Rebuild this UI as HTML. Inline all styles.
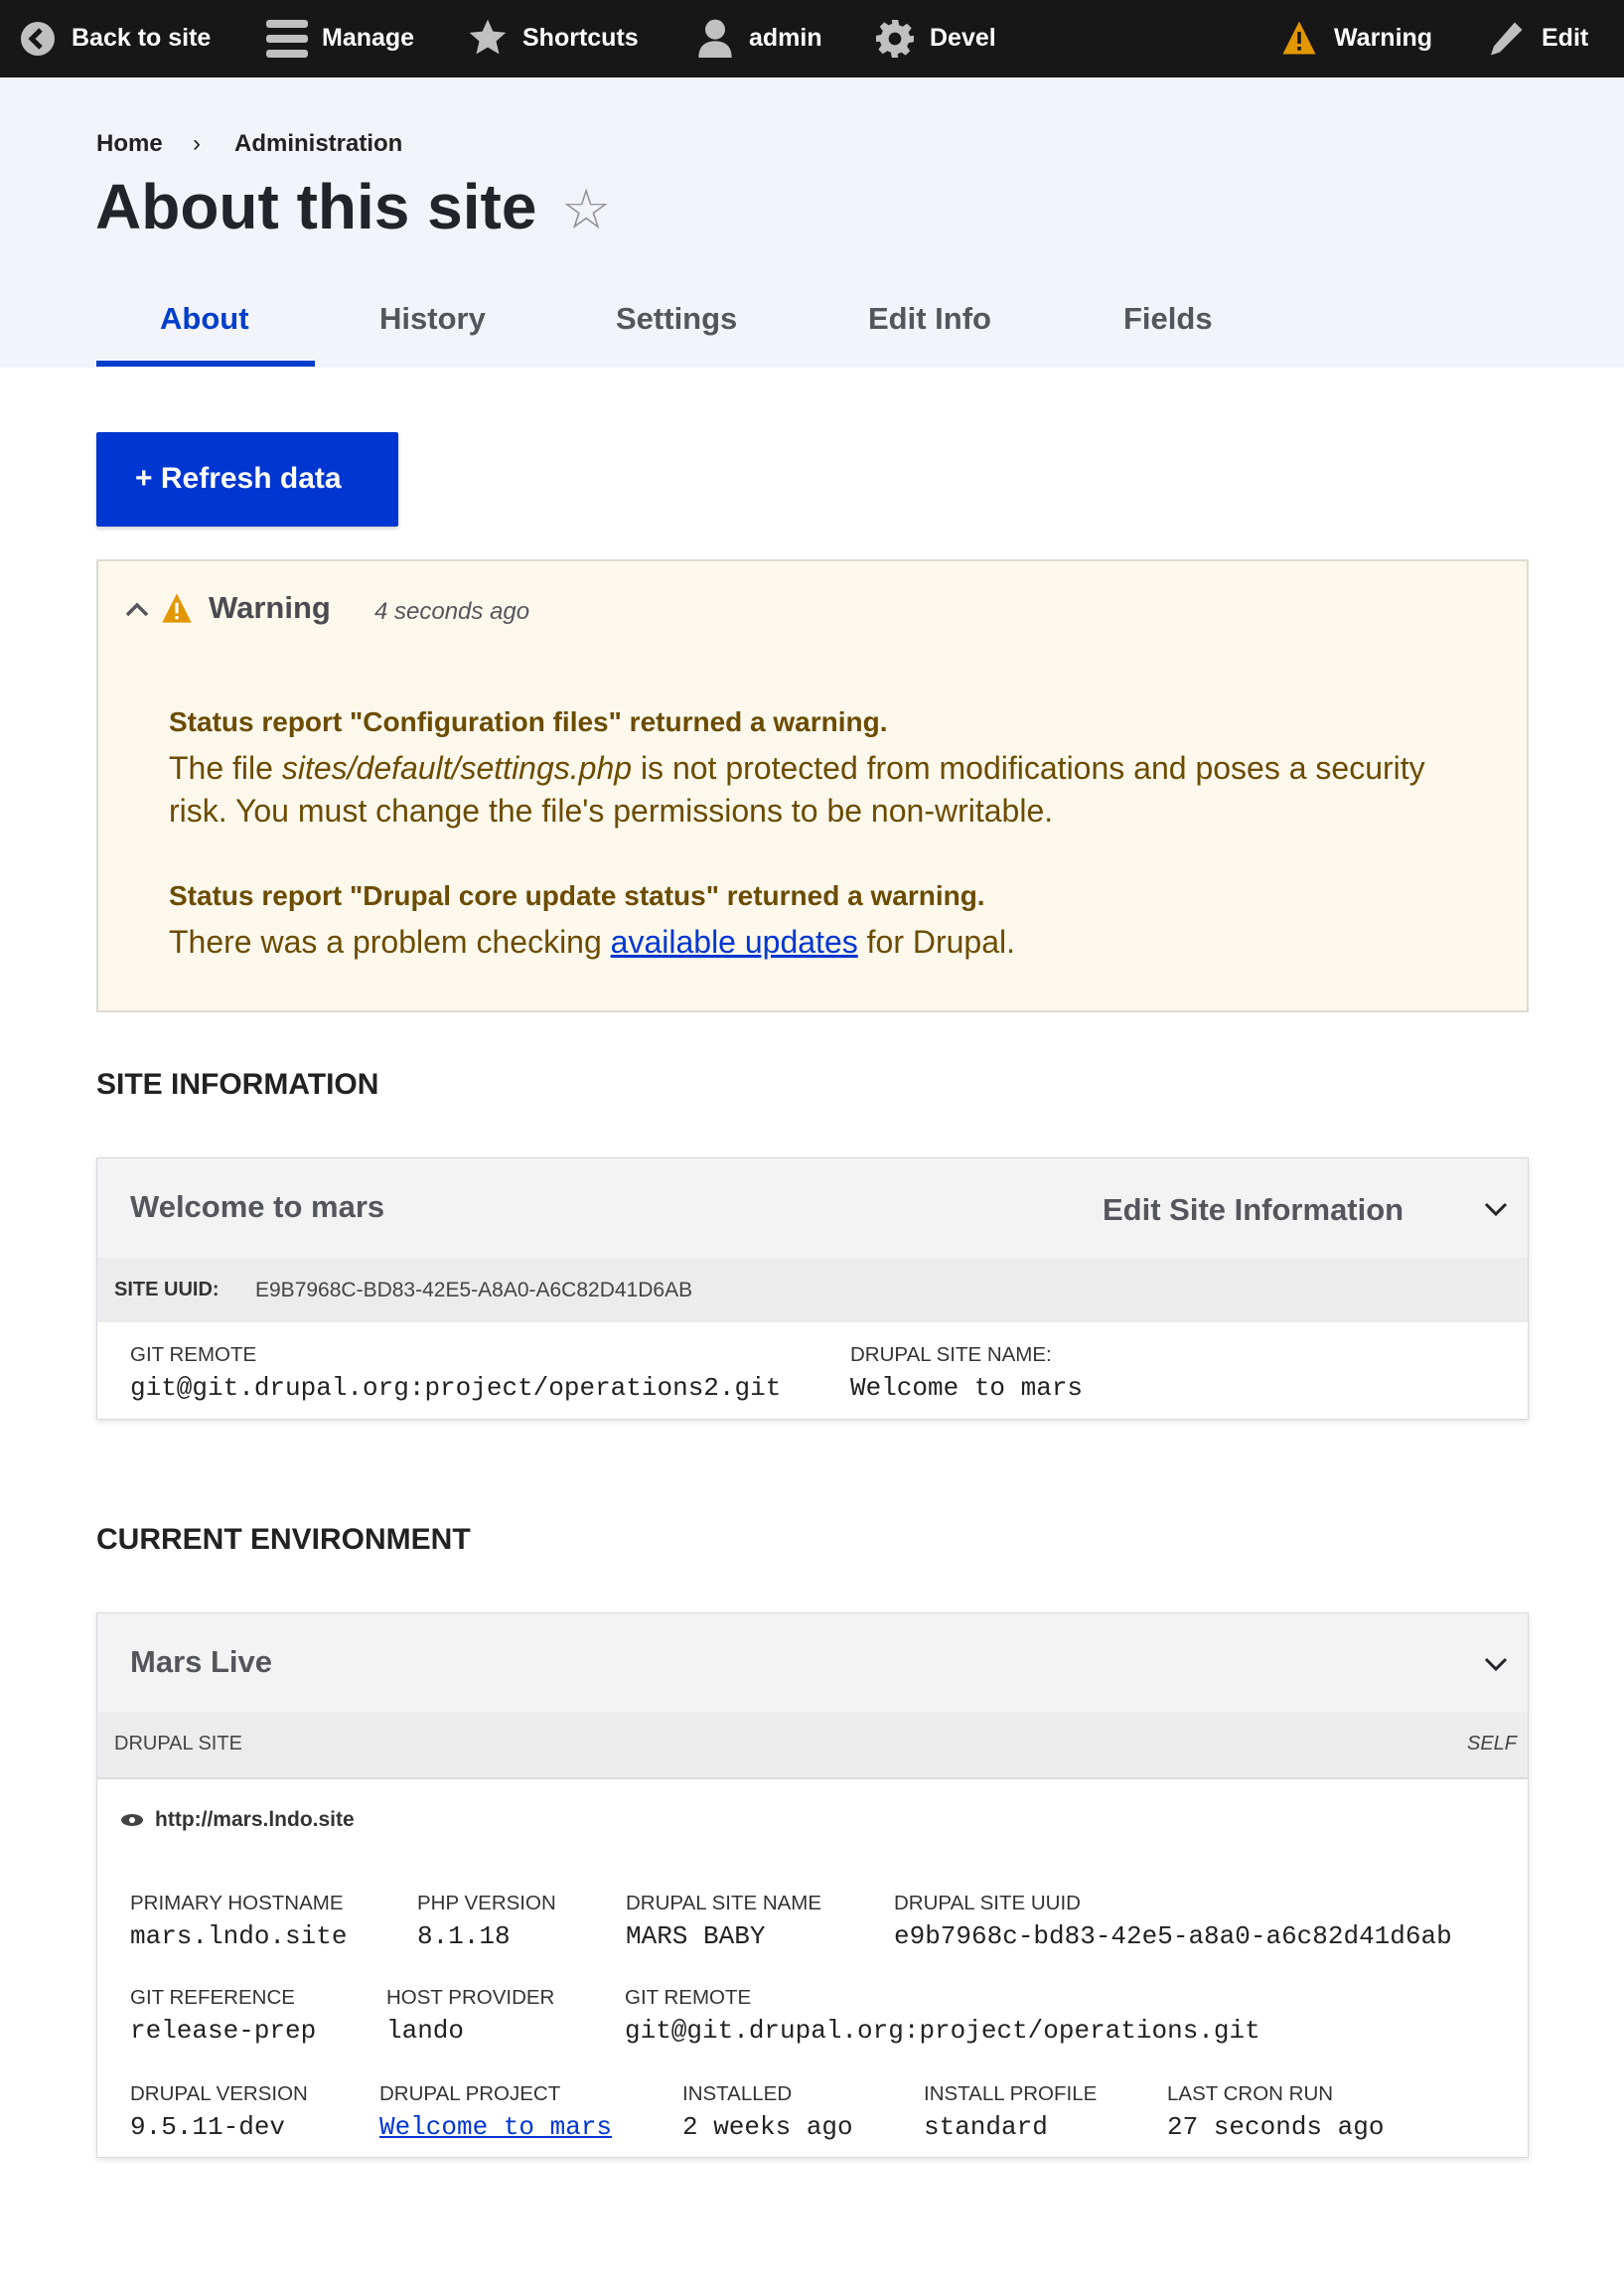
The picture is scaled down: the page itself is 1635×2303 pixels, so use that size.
<!DOCTYPE html>
<html><head><meta charset="utf-8">
<style>
*{margin:0;padding:0;box-sizing:border-box}
body{width:1635px;height:2303px;background:#fff;font-family:"Liberation Sans",sans-serif;position:relative;overflow:hidden;color:#222}
.a{position:absolute;white-space:nowrap}
.tb{background:#171717;height:78px;left:0;top:0;width:1635px;box-shadow:0 2px 4px rgba(0,0,0,.3)}
.ti{color:#fff;font-weight:bold;font-size:25px;top:24px}
.hdr{background:#f3f4f9;left:0;top:78px;width:1635px;height:292px}
.tab{font-size:31px;font-weight:bold;color:#55565b;top:303px}
.lbl{font-size:20.5px;color:#333;text-transform:uppercase}
.val{font-family:"Liberation Mono",monospace;font-size:26px;color:#222}
.card{border:1px solid #d8d9df;box-shadow:0 2px 6px rgba(0,0,0,.12);background:#fff}
.sec{font-size:30px;font-weight:bold;color:#222}
</style></head><body>
<div class="a tb"></div>
<svg class="a" style="left:20px;top:21px" width="36" height="36" viewBox="0 0 36 36"><circle cx="18" cy="18" r="17" fill="#c0c0c0"/><path d="M21 9 L12 18 L21 27" stroke="#171717" stroke-width="5" fill="none"/></svg>
<div class="a ti" style="left:72px">Back to site</div>
<svg class="a" style="left:268px;top:20px" width="42" height="38"><rect x="0" y="0" width="42" height="8" rx="3" fill="#c0c0c0"/><rect x="0" y="15" width="42" height="8" rx="3" fill="#c0c0c0"/><rect x="0" y="30" width="42" height="8" rx="3" fill="#c0c0c0"/></svg>
<div class="a ti" style="left:324px">Manage</div>
<svg class="a" style="left:470px;top:18px" width="42" height="40" viewBox="0 0 24 24"><path d="M12 1l3.2 7.2 7.8.7-5.9 5.2 1.8 7.7L12 17.8 5.1 21.8l1.8-7.7L1 8.9l7.8-.7z" fill="#c0c0c0"/></svg>
<div class="a ti" style="left:526px">Shortcuts</div>
<svg class="a" style="left:700px;top:18px" width="40" height="40" viewBox="0 0 24 24"><circle cx="12" cy="7" r="6" fill="#c0c0c0"/><path d="M2 24c0-7 4-10 10-10s10 3 10 10z" fill="#c0c0c0"/></svg>
<div class="a ti" style="left:754px">admin</div>
<svg class="a" style="left:882px;top:20px" width="38" height="38" viewBox="0 0 24 24"><path d="M10 0h4l.6 3.3 2.3 1 2.8-1.9 2.8 2.8-1.9 2.8 1 2.3L24 10v4l-3.3.6-1 2.3 1.9 2.8-2.8 2.8-2.8-1.9-2.3 1L14 24h-4l-.6-3.3-2.3-1-2.8 1.9-2.8-2.8 1.9-2.8-1-2.3L0 14v-4l3.3-.6 1-2.3-1.9-2.8 2.8-2.8 2.8 1.9 2.3-1z" fill="#c0c0c0"/><circle cx="12" cy="12" r="4" fill="#171717"/></svg>
<div class="a ti" style="left:936px">Devel</div>
<svg class="a" style="left:1290px;top:19px" width="36" height="38" viewBox="0 0 24 24"><path d="M12 1 L23 23 H1 Z" fill="#e29700"/><rect x="10.8" y="8" width="2.4" height="8" fill="#171717"/><rect x="10.8" y="18" width="2.4" height="2.5" fill="#171717"/></svg>
<div class="a ti" style="left:1343px">Warning</div>
<svg class="a" style="left:1498px;top:20px" width="36" height="38" viewBox="0 0 24 24"><path d="M18 1l5 5L8 21l-6 2 2-6z" fill="#c0c0c0"/></svg>
<div class="a ti" style="left:1552px">Edit</div>

<div class="a hdr"></div>
<div class="a" style="left:97px;top:131px;font-size:24px;font-weight:bold;color:#222">Home</div>
<div class="a" style="left:194px;top:131px;font-size:24px;color:#222">›</div>
<div class="a" style="left:236px;top:131px;font-size:24px;font-weight:bold;color:#222">Administration</div>
<div class="a" style="left:96px;top:171px;font-size:64px;font-weight:bold;color:#232429">About this site</div>
<div class="a" style="left:565px;top:178px;font-size:56px;color:#8e929c">☆</div>
<div class="a tab" style="left:161px;color:#003ecc">About</div>
<div class="a tab" style="left:382px">History</div>
<div class="a tab" style="left:620px">Settings</div>
<div class="a tab" style="left:874px">Edit Info</div>
<div class="a tab" style="left:1131px">Fields</div>
<div class="a" style="left:97px;top:363px;width:220px;height:6px;background:#003ecc"></div>

<div class="a" style="left:97px;top:435px;width:304px;height:95px;background:#0036d1;border-radius:2px;box-shadow:0 2px 4px rgba(0,0,0,.2)"></div>
<div class="a" style="left:136px;top:465px;font-size:30px;font-weight:bold;color:#fff">+ Refresh data</div>

<div class="a" style="left:97px;top:563px;width:1442px;height:456px;background:#fcf8ec;border:2px solid #dedbd2"></div>
<svg class="a" style="left:126px;top:604px" width="24" height="18"><path d="M2 15 L12 5 L22 15" stroke="#55565b" stroke-width="3.5" fill="none"/></svg>
<svg class="a" style="left:162px;top:596px" width="32" height="32" viewBox="0 0 24 24"><path d="M12 1 L23 23 H1 Z" fill="#e29700"/><rect x="10.8" y="8" width="2.4" height="8" fill="#fff"/><rect x="10.8" y="18" width="2.4" height="2.5" fill="#fff"/></svg>
<div class="a" style="left:210px;top:594px;font-size:31px;font-weight:bold;color:#4a4b50">Warning</div>
<div class="a" style="left:377px;top:602px;font-size:24px;font-style:italic;color:#55565b">4 seconds ago</div>
<div class="a" style="left:170px;top:711px;font-size:28px;font-weight:bold;color:#6b4c00">Status report "Configuration files" returned a warning.</div>
<div class="a" style="left:170px;top:752px;font-size:32px;color:#6b4c00;line-height:43px">The file <i>sites/default/settings.php</i> is not protected from modifications and poses a security<br>risk. You must change the file's permissions to be non-writable.</div>
<div class="a" style="left:170px;top:886px;font-size:28px;font-weight:bold;color:#6b4c00">Status report "Drupal core update status" returned a warning.</div>
<div class="a" style="left:170px;top:930px;font-size:32px;color:#6b4c00">There was a problem checking <span style="color:#0036d1;text-decoration:underline">available updates</span> for Drupal.</div>

<div class="a sec" style="left:97px;top:1075px">SITE INFORMATION</div>
<div class="a card" style="left:97px;top:1165px;width:1442px;height:264px"></div>
<div class="a" style="left:98px;top:1166px;width:1440px;height:100px;background:#f3f3f3"></div>
<div class="a" style="left:98px;top:1266px;width:1440px;height:65px;background:#ececec"></div>
<div class="a" style="left:131px;top:1197px;font-size:31px;font-weight:bold;color:#55565b">Welcome to mars</div>
<div class="a" style="left:1110px;top:1200px;font-size:31px;font-weight:bold;color:#55565b">Edit Site Information</div>
<svg class="a" style="left:1494px;top:1210px" width="24" height="16"><path d="M2 2 L12 12 L22 2" stroke="#232429" stroke-width="3" fill="none"/></svg>
<div class="a" style="left:115px;top:1287px;font-size:20px;font-weight:bold;color:#333">SITE UUID:</div>
<div class="a" style="left:257px;top:1287px;font-size:21px;color:#444">E9B7968C-BD83-42E5-A8A0-A6C82D41D6AB</div>
<div class="a lbl" style="left:131px;top:1352px">Git Remote</div>
<div class="a val" style="left:131px;top:1382px">git@git.drupal.org:project/operations2.git</div>
<div class="a lbl" style="left:856px;top:1352px">Drupal Site Name:</div>
<div class="a val" style="left:856px;top:1382px">Welcome to mars</div>

<div class="a sec" style="left:97px;top:1533px">CURRENT ENVIRONMENT</div>
<div class="a card" style="left:97px;top:1623px;width:1442px;height:549px"></div>
<div class="a" style="left:98px;top:1624px;width:1440px;height:99px;background:#f3f3f3"></div>
<div class="a" style="left:98px;top:1723px;width:1440px;height:68px;background:#ececec;border-bottom:2px solid #dcdcdc"></div>
<div class="a" style="left:131px;top:1655px;font-size:31px;font-weight:bold;color:#55565b">Mars Live</div>
<svg class="a" style="left:1494px;top:1668px" width="24" height="16"><path d="M2 2 L12 12 L22 2" stroke="#232429" stroke-width="3" fill="none"/></svg>
<div class="a" style="left:115px;top:1744px;font-size:20px;color:#444">DRUPAL SITE</div>
<div class="a" style="left:1477px;top:1744px;font-size:20px;font-style:italic;color:#444">SELF</div>
<svg class="a" style="left:121px;top:1825px" width="24" height="14" viewBox="0 0 24 14"><ellipse cx="12" cy="7" rx="11" ry="6" fill="#444"/><circle cx="12" cy="7" r="3" fill="#fff"/></svg>
<div class="a" style="left:156px;top:1820px;font-size:21px;font-weight:bold;color:#333">http://mars.lndo.site</div>

<div class="a lbl" style="left:131px;top:1904px">Primary Hostname</div>
<div class="a val" style="left:131px;top:1934px">mars.lndo.site</div>
<div class="a lbl" style="left:420px;top:1904px">PHP Version</div>
<div class="a val" style="left:420px;top:1934px">8.1.18</div>
<div class="a lbl" style="left:630px;top:1904px">Drupal Site Name</div>
<div class="a val" style="left:630px;top:1934px">MARS BABY</div>
<div class="a lbl" style="left:900px;top:1904px">Drupal Site UUID</div>
<div class="a val" style="left:900px;top:1934px">e9b7968c-bd83-42e5-a8a0-a6c82d41d6ab</div>

<div class="a lbl" style="left:131px;top:1999px">Git Reference</div>
<div class="a val" style="left:131px;top:2029px">release-prep</div>
<div class="a lbl" style="left:389px;top:1999px">Host Provider</div>
<div class="a val" style="left:389px;top:2029px">lando</div>
<div class="a lbl" style="left:629px;top:1999px">Git Remote</div>
<div class="a val" style="left:629px;top:2029px">git@git.drupal.org:project/operations.git</div>

<div class="a lbl" style="left:131px;top:2096px">Drupal Version</div>
<div class="a val" style="left:131px;top:2126px">9.5.11-dev</div>
<div class="a lbl" style="left:382px;top:2096px">Drupal Project</div>
<div class="a val" style="left:382px;top:2126px;color:#0036d1;text-decoration:underline">Welcome to mars</div>
<div class="a lbl" style="left:687px;top:2096px">Installed</div>
<div class="a val" style="left:687px;top:2126px">2 weeks ago</div>
<div class="a lbl" style="left:930px;top:2096px">Install Profile</div>
<div class="a val" style="left:930px;top:2126px">standard</div>
<div class="a lbl" style="left:1175px;top:2096px">Last Cron Run</div>
<div class="a val" style="left:1175px;top:2126px">27 seconds ago</div>
</body></html>
